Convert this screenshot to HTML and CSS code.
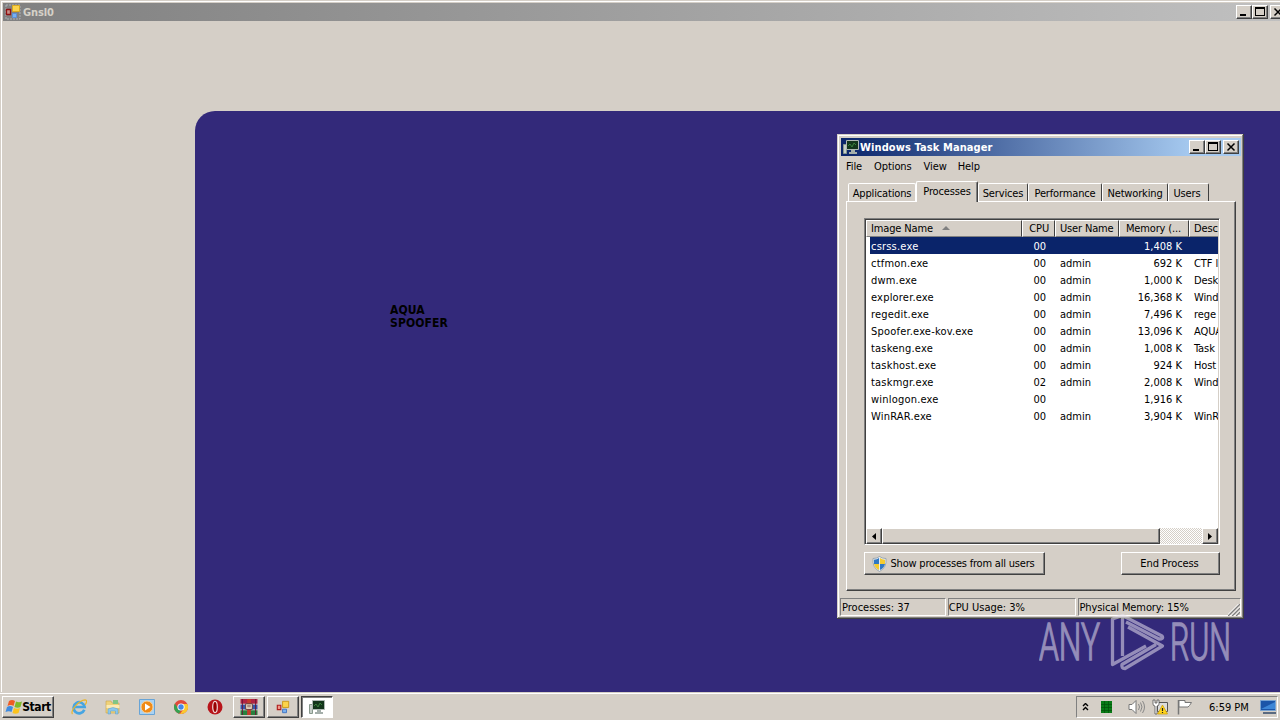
FILE: index.html
```html
<!DOCTYPE html>
<html lang="en">
<head>
  <meta charset="UTF-8">
  <title>Desktop</title>
  <link rel="stylesheet" href="styles.css">
</head>
<body>
  <svg class="defs" width="0" height="0">
    <symbol id="i-app" viewBox="0 0 16 16">
      <path d="M1 1h14v14H1z" fill="none" stroke="#b8bcc4" stroke-width=".8" stroke-dasharray="2 1"/>
      <path d="M7.500 1.500h7v6h-7z" fill="#fbd34b" stroke="#d8a820"/>
      <path d="M1.500 5.500h4v5h-4z" fill="#c89088" stroke="#901010" stroke-width="1.300"/>
      <path d="M7.500 9.500h4v4h-4z" fill="#79b1f0" stroke="#5c90d8"/>
    </symbol>
    <symbol id="i-monitor" viewBox="0 0 16 16">
      <path d="M.5 5.500h3v9h-3z" fill="#c5cec8" stroke="#88988c"/>
      <path d="M3.500 1.500h12v9h-12z" fill="#12351b" stroke="#aeb8b4"/>
      <path d="M5 7l2-2 2 3 2-4 2 2" fill="none" stroke="#38803c"/>
      <path d="M8 11h4v2h2v2H6v-2h2z" fill="#a4aeaa"/>
    </symbol>
    <symbol id="i-min" viewBox="0 0 12 10"><path d="M2 7h6v2H2z"/></symbol>
    <symbol id="i-max" viewBox="0 0 12 10"><path d="M1 0h10v9H1zM2 2v6h8V2z" fill-rule="evenodd"/></symbol>
    <symbol id="i-close" viewBox="0 0 12 10"><path d="M2.500 1.500l7 7m0-7l-7 7" fill="none" stroke="#000" stroke-width="1.500"/></symbol>
  </svg>

  <main class="desktop">
    <section class="app">
      <header class="titlebar titlebar-off">
        <svg class="icon"><use href="#i-app"/></svg>
        <h1>Gnsl0</h1>
        <div class="controls">
          <button aria-label="Minimize"><svg><use href="#i-min"/></svg></button>
          <button aria-label="Maximize"><svg><use href="#i-max"/></svg></button>
          <button class="gap" aria-label="Close"><svg><use href="#i-close"/></svg></button>
        </div>
      </header>
      <div class="app-body">
        <div class="panel"><p>AQUA<br>SPOOFER</p></div>
      </div>
    </section>

    <footer class="taskbar">
      <button class="start">
        <svg width="18" height="16" viewBox="0 0 18 16">
          <path d="M4 2q3-2 6 0L8.500 7Q6 5 2.500 7z" fill="#ef5b24"/>
          <path d="M11 2.500q3 1.500 6 0L15.500 8q-3 1.500-6 0z" fill="#7fba28"/>
          <path d="M2 8q3-2 6 0l-1.500 5Q4 11.500.500 13z" fill="#3f8be0"/>
          <path d="M9 9q3 1.500 6 0l-1.500 5q-3 1.500-6 0z" fill="#fcc31c"/>
        </svg>
        <span>Start</span>
      </button>
      <nav class="quick">
        <svg viewBox="0 0 16 16"><path d="M13.300 10.700A5.500 5.500 0 1 1 13.600 8H4" fill="none" stroke="#46a5e2" stroke-width="2.700"/><path d="M1.500 15C-1 12 8 1 14 .800c3 0 1 4 0 5" fill="none" stroke="#e9b52c" stroke-width="1.200"/></svg>
        <svg viewBox="0 0 16 16"><path d="M1 2h5l1 2h7v10H1z" fill="#efd27a" stroke="#c9a449" stroke-width=".6"/><path d="M8 1h5v4H8z" fill="#82c584"/><path d="M1.500 6h13v3h-13z" fill="#fbeab4"/><path d="M3 15v-5q5-3 10 0v5h-2.500v-3h-5v3z" fill="#8cc7ec" stroke="#5a9cc8" stroke-width=".5"/></svg>
        <svg viewBox="0 0 16 16"><path d="M.5.500h15v15H.5z" fill="#a9d2f3" stroke="#68a4d6"/><circle cx="8" cy="8" r="6" fill="#f08a16" stroke="#fbd198"/><path d="M6 4.500l5.500 3.500L6 11.500z" fill="#fff"/></svg>
        <svg viewBox="0 0 16 16"><circle cx="8" cy="8" r="7" fill="#e04a3c"/><path d="M1.900 4.600L5.300 10l2.700 1L6 14.700A7 7 0 0 1 1.900 4.600z" fill="#35a151"/><path d="M8 5h6.300A7 7 0 0 1 7 15l4-5.500z" fill="#fbc92f"/><circle cx="8" cy="8" r="3.600" fill="#fff"/><circle cx="8" cy="8" r="2.700" fill="#4386e8"/></svg>
        <svg viewBox="0 0 16 16"><circle cx="8" cy="8" r="7.500" fill="#b8141a"/><ellipse cx="8" cy="8" rx="2.300" ry="5.600" fill="#900" stroke="#f0d8d8" stroke-width="1.200"/></svg>
      </nav>
      <div class="tasks">
        <button>
          <svg width="18" height="16" viewBox="0 0 18 17"><path d="M0 0h18v5H0z" fill="#b02444"/><path d="M0 6h18v5H0z" fill="#3458b0"/><path d="M0 12h18v5H0z" fill="#27813e"/><path d="M2 0v17M16 0v17" stroke="#6b1838" stroke-width="1"/><path d="M7 0h4v17H7z" fill="#c33a2c"/><path d="M5.500 5h7v6h-7z" fill="#f4ead0" stroke="#633"/><path d="M8 6v3M10 6v3" stroke="#633"/></svg>
        </button>
        <button>
          <svg width="14" height="14" viewBox="0 0 16 16"><path d="M7.500 1.500h7v7h-7z" fill="#fbd34b" stroke="#c89412"/><path d="M1.500 6h4v5h-4z" fill="#ef9888" stroke="#b01c1c" stroke-width="1.300"/><path d="M7.500 10.500h4.500v4H7.500z" fill="#79b1f0" stroke="#3c70c0"/></svg>
        </button>
        <button class="active"><svg width="16" height="16"><use href="#i-monitor"/></svg></button>
      </div>
      <div class="tray">
        <svg class="t-chev" width="7" height="9" viewBox="0 0 7 9"><path d="M1 3l2.500-2.500L6 3M1 7l2.500-2.500L6 7" fill="none" stroke="#000" stroke-width="1.400"/></svg>
        <svg class="t-cpu" width="11" height="12" viewBox="0 0 11 12"><path d="M0 0h11v12H0z" fill="#087a16"/><path d="M0 3.500h11M0 6.500h11M0 9.500h11M3.500 0v12M7.500 0v12" stroke="#035008" stroke-width=".7"/></svg>
        <svg class="t-vol" width="18" height="16" viewBox="0 0 18 16"><path d="M1 5.500h3l4-4v13l-4-4H1z" fill="#fff" stroke="#777"/><path d="M10.500 5q2 3 0 6M12.500 3.500q3 4.500 0 9M14.500 2q4 6 0 12" fill="none" stroke="#888"/></svg>
        <svg class="t-net" width="17" height="16" viewBox="0 0 17 16"><path d="M5.500 3.500h10v9h-10z" fill="#ddd" stroke="#555"/><path d="M1 1v4q0 2 2 2v8h2V7q2 0 2-2V1H5v3H3V1z" fill="#fff" stroke="#555" stroke-width=".8"/><path d="M10.500 6l5 9h-10z" fill="#ffd51d" stroke="#c99a00" stroke-width=".7"/><path d="M10.500 9v3m0 1v1" stroke="#222" stroke-width="1.200"/></svg>
        <svg class="t-flag" width="17" height="16" viewBox="0 0 17 16"><path d="M2.500 1v14.500" stroke="#777" stroke-width="1.500"/><path d="M3 1.500h6v2h6.500l-2 3-1.500 1.500H9V8H3z" fill="#fff" stroke="#777"/></svg>
        <time>6:59 PM</time>
        <svg class="t-desk" width="16" height="14" viewBox="0 0 16 14"><path d="M.5.500h15v10H.5z" fill="#1b55a8" stroke="#79a3d1"/><path d="M1 9L15 2v7z" fill="#3d86d6"/><path d="M3 12h13v2H3z" fill="#5a6a80"/></svg>
      </div>
    </footer>
  </main>

  <section class="window">
    <header class="titlebar">
      <svg class="icon"><use href="#i-monitor"/></svg>
      <h2>Windows Task Manager</h2>
      <div class="controls">
        <button aria-label="Minimize"><svg><use href="#i-min"/></svg></button>
        <button aria-label="Maximize"><svg><use href="#i-max"/></svg></button>
        <button class="gap" aria-label="Close"><svg><use href="#i-close"/></svg></button>
      </div>
    </header>
    <nav class="menu"><span>File</span><span>Options</span><span>View</span><span>Help</span></nav>
    <div class="tabs">
      <span class="tab-apps">Applications</span><span class="tab-proc selected">Processes</span><span class="tab-serv">Services</span><span class="tab-perf">Performance</span><span class="tab-net">Networking</span><span class="tab-users">Users</span>
    </div>
    <div class="page">
      <div class="list">
        <div class="row head">
          <span>Image Name <i class="sort"></i></span><span>CPU</span><span>User Name</span><span>Memory (...</span><span>Desc</span>
        </div>
        <div class="rows">
          <div class="row current"><span>csrss.exe</span><span>00</span><span></span><span>1,408 K</span><span></span></div>
          <div class="row"><span>ctfmon.exe</span><span>00</span><span>admin</span><span>692 K</span><span>CTF l</span></div>
          <div class="row"><span>dwm.exe</span><span>00</span><span>admin</span><span>1,000 K</span><span>Desk</span></div>
          <div class="row"><span>explorer.exe</span><span>00</span><span>admin</span><span>16,368 K</span><span>Wind</span></div>
          <div class="row"><span>regedit.exe</span><span>00</span><span>admin</span><span>7,496 K</span><span>rege</span></div>
          <div class="row"><span>Spoofer.exe-kov.exe</span><span>00</span><span>admin</span><span>13,096 K</span><span>AQUA</span></div>
          <div class="row"><span>taskeng.exe</span><span>00</span><span>admin</span><span>1,008 K</span><span>Task</span></div>
          <div class="row"><span>taskhost.exe</span><span>00</span><span>admin</span><span>924 K</span><span>Host</span></div>
          <div class="row"><span>taskmgr.exe</span><span>02</span><span>admin</span><span>2,008 K</span><span>Wind</span></div>
          <div class="row"><span>winlogon.exe</span><span>00</span><span></span><span>1,916 K</span><span></span></div>
          <div class="row"><span>WinRAR.exe</span><span>00</span><span>admin</span><span>3,904 K</span><span>WinR</span></div>
        </div>
        <div class="scroll">
          <button aria-label="Scroll left"><svg width="4" height="7" viewBox="0 0 4 7"><path d="M4 0v7L0 3.500z"/></svg></button>
          <div class="thumb"></div>
          <div class="track"></div>
          <button aria-label="Scroll right"><svg width="4" height="7" viewBox="0 0 4 7"><path d="M0 0v7l4-3.500z"/></svg></button>
        </div>
      </div>
      <div class="actions">
        <button class="all">
          <svg width="15" height="16" viewBox="0 0 15 16"><path d="M7.500.500Q10 2.500 14 2.500q1 9-6.500 13Q0 11.500 1 2.500q4 0 6.500-2z" fill="#e8edf2" stroke="#8c9aa8" stroke-width=".8"/><path d="M7 2v6H2V3.800Q5 3.600 7 2zM8 8h5q-1 4-5 6z" fill="#2f78c4"/><path d="M8 2v6h5V3.800Q10 3.600 8 2zM7 8H2q1 4 5 6z" fill="#f4cb2e"/></svg>
          <span>Show processes from all users</span>
        </button>
        <button class="end"><span>End Process</span></button>
      </div>
    </div>
    <footer class="status">
      <span class="s-proc">Processes: 37</span>
      <span class="s-cpu">CPU Usage: 3%</span>
      <span class="s-mem">Physical Memory: 15%
        <svg width="12" height="12" viewBox="0 0 12 12"><path d="M0 12L12 0M4 12l8-8M8 12l4-4" stroke="#808080" stroke-width="1.500"/><path d="M-1.500 12L12-1.500M2.500 12l9.500-9.500M6.500 12L12 6.500" stroke="#fff"/></svg>
      </span>
    </footer>
  </section>

  <svg class="watermark" width="198" height="64" viewBox="0 0 198 64">
    <text transform="translate(0 49.500) scale(1 1.120)" textLength="61" lengthAdjust="spacingAndGlyphs">ANY</text>
    <path d="M83.500 46V5.500L73.500 9v45.500L107 36M83.500 5.500L123 26q2 3-3 3L87 12M89 17l34.500 19L86 58.500q-4 0-3-4l34-20" fill="none" stroke-width="3.300" stroke-linejoin="round"/>
    <text transform="translate(131 49.500) scale(1 1.120)" textLength="61" lengthAdjust="spacingAndGlyphs">RUN</text>
  </svg>
</body>
</html>
```
FILE: styles.css
```css
:root {
  --face: #d5cfc7;
  --shade: #808080;
  --dark: #404040;
  --navy: #0a246a;
}
* {
  box-sizing: border-box;
}
body {
  margin: 0;
  width: 1280px;
  height: 720px;
  overflow: hidden;
  font: 11px/13px Tahoma, "DejaVu Sans Condensed", "DejaVu Sans", sans-serif;
  font-stretch: condensed;
  color: #000;
  background: var(--face);
}
h1, h2, p {
  margin: 0;
  font-size: 11px;
}
svg {
  display: block;
  flex: none;
}
.defs {
  position: absolute;
}
button {
  display: flex;
  align-items: center;
  justify-content: center;
  margin: 0;
  padding: 0;
  font: inherit;
  color: inherit;
  background: var(--face);
  border: 1px solid;
  border-color: #fff var(--dark) var(--dark) #fff;
  box-shadow: inset -1px -1px var(--shade);
}
.desktop {
  display: flex;
  flex-direction: column;
  height: 720px;
}

/* Title bars */
.titlebar {
  display: flex;
  align-items: center;
  height: 18px;
  padding: 0 2px;
  color: #fff;
  background: linear-gradient(90deg, #0a246a, #a6caf0 88%);
}
.titlebar-off {
  padding: 0 0 0 2px;
  color: #d5d1c8;
  background: linear-gradient(90deg, #808080, #c0c0c0);
}
.icon {
  width: 16px;
  height: 16px;
  margin-right: 1px;
}
.titlebar h1 {
  letter-spacing: -.1px;
}
.titlebar h2 {
  letter-spacing: .1px;
}
.controls {
  display: flex;
  margin-left: auto;
}
.controls button {
  width: 16px;
  height: 14px;
}
.controls svg {
  width: 12px;
  height: 10px;
}
.controls .gap {
  margin-left: 2px;
}

/* Maximized window */
.app {
  height: 692px;
  padding: 3px 0 0 3px;
  border-top: 0;
  box-shadow: inset 1px 1px #d5cfc7, inset 2px 2px #fff;
}
.titlebar-off .icon {
  margin-right: 2px;
}
.titlebar-off .controls {
  margin-right: -6px;
}
.app-body {
  display: flex;
  height: 671px;
  padding: 90px 0 0 192px;
}
.panel {
  flex: 1;
  padding: 193px 0 0 195px;
  background: #33297a;
  border-top-left-radius: 20px;
}
.panel p {
  font: bold 12px/13px "DejaVu Sans Condensed", sans-serif;
  letter-spacing: .1px;
}

/* Taskbar */
.taskbar {
  display: flex;
  height: 28px;
  padding: 4px 2px 2px;
  box-shadow: inset 0 1px var(--face), inset 0 2px #fff;
}
.start {
  width: 52px;
  height: 22px;
  font-size: 12px;
  font-weight: bold;
}
.start span {
  margin-left: -1px;
  letter-spacing: -.4px;
}
.quick {
  display: flex;
  gap: 18px;
  padding: 3px 0 0 17px;
}
.quick svg {
  width: 16px;
  height: 16px;
}
.tasks {
  display: flex;
  gap: 2px;
  margin-left: 10px;
}
.tasks button {
  width: 32px;
  height: 22px;
}
.tasks .active {
  background: #fff;
  border-color: var(--dark) #fff #fff var(--dark);
  box-shadow: inset 1px 1px var(--shade);
}
.tray {
  display: flex;
  align-items: center;
  width: 202px;
  height: 22px;
  margin-left: auto;
  padding-left: 5px;
  border: 1px solid;
  border-color: var(--shade) #fff #fff var(--shade);
}
.t-cpu {
  margin: -1px 0 0 12px;
}
.t-vol {
  margin-left: 16px;
}
.t-net {
  margin-left: 6px;
}
.t-flag {
  margin-left: 7px;
}
.tray time {
  width: 43px;
  margin-left: 16px;
  white-space: nowrap;
}
.t-desk {
  margin-left: 8px;
}

/* Task Manager */
.window {
  position: absolute;
  left: 837px;
  top: 134px;
  width: 407px;
  height: 485px;
  padding: 4px 3px 2px 4px;
  background: var(--face);
  border: 0;
  box-shadow: inset -1px -1px var(--dark), inset 1px 1px var(--face), inset -2px -2px var(--shade), inset 2px 2px #fff;
}
.window .titlebar {
  width: 400px;
}
.menu {
  display: flex;
  gap: 12px;
  height: 26px;
  padding: 4px 0 0 5px;
  letter-spacing: -.1px;
}
.menu span:last-child {
  margin-left: -1px;
}
.tabs {
  display: flex;
  align-items: flex-end;
  height: 19px;
  padding-left: 7px;
}
.tabs span {
  height: 18px;
  padding-top: 3px;
  text-align: center;
  white-space: nowrap;
  letter-spacing: -.15px;
  border: 1px solid;
  border-color: #fff var(--dark) transparent #fff;
  border-bottom: 0;
  border-radius: 2px 2px 0 0;
}
.tabs .selected {
  position: relative;
  height: 21px;
  margin-bottom: -1px;
  background: var(--face);
  box-shadow: inset -1px 0 var(--shade);
}
.tab-apps {
  width: 68px;
  border-right-color: #fff !important;
}
.tab-proc {
  width: 62px;
}
.tab-serv {
  width: 50px;
}
.tab-perf {
  width: 74px;
}
.tab-net {
  width: 66px;
}
.tabs .tab-users {
  width: 41px;
  padding-right: 3px;
}
.page {
  width: 390px;
  height: 390px;
  margin-left: 5px;
  padding: 16px 15px 0 17px;
  border: 1px solid;
  border-color: #fff var(--dark) var(--dark) #fff;
  box-shadow: inset -1px -1px var(--shade);
}
.list {
  width: 356px;
  height: 327px;
  border: 1px solid;
  border-color: var(--shade) #fff #fff var(--shade);
  box-shadow: inset 1px 1px var(--dark), inset -1px -1px var(--face);
  padding: 1px;
  background: #fff;
  overflow: hidden;
}
.row {
  display: grid;
  grid-template-columns: 156px 33px 64px 70px 29px;
  height: 17px;
  line-height: 19px;
}
.row span {
  height: 17px;
  padding-left: 5px;
  white-space: nowrap;
  overflow: hidden;
}
.row span:first-child {
  letter-spacing: .2px;
}
.row span:nth-child(2) {
  padding: 0 9px 0 0;
  text-align: right;
}
.row span:nth-child(4) {
  padding: 0 7px 0 0;
  text-align: right;
}
.row span:last-child {
  letter-spacing: -.1px;
}
.rows {
  height: 291px;
}
.current {
  margin-left: 4px;
  grid-template-columns: 152px 33px 64px 70px 29px;
  color: #fff;
  background: var(--navy);
}
.current span:first-child {
  padding-left: 1px;
}
.head span, .head span:first-child {
  background: var(--face);
  border: 1px solid;
  border-color: #fff var(--dark) var(--shade) #fff;
  line-height: 16px;
  padding-left: 4px;
  letter-spacing: -.15px;
}
.head span:nth-child(2) {
  padding-right: 5px;
}
.head span:last-child {
  border-right: 0;
}
.sort {
  display: inline-block;
  margin: 0 0 2px 6px;
  border: 4px solid transparent;
  border-top: 0;
  border-bottom-color: var(--shade);
}
.scroll {
  display: flex;
  height: 16px;
}
.scroll button {
  width: 16px;
}
.thumb {
  width: 278px;
  background: var(--face);
  border: 1px solid;
  border-color: #fff var(--dark) var(--dark) #fff;
  box-shadow: inset -1px -1px var(--shade);
}
.track {
  flex: 1;
  background: repeating-conic-gradient(#fff 0 25%, var(--face) 0 50%) 0 0 / 2px 2px;
}
.actions {
  display: flex;
  justify-content: space-between;
  width: 356px;
  padding-top: 7px;
}
.actions button {
  height: 23px;
}
.all {
  width: 181px;
  gap: 3px;
}
.all span {
  letter-spacing: -.2px;
  margin-right: 2px;
}
.end {
  width: 99px;
}
.end span {
  letter-spacing: -.1px;
  margin-right: 2px;
}
.status {
  display: flex;
  gap: 2px;
  padding: 7px 0 0;
  margin-left: -1px;
}
.status span {
  height: 18px;
  padding: 2px 0 0 1px;
  white-space: nowrap;
  border: 1px solid;
  border-color: var(--shade) #fff #fff var(--shade);
}
.s-proc {
  width: 106px;
}
.status .s-cpu {
  width: 129px;
  padding-left: 0;
}
.status .s-mem {
  display: flex;
  justify-content: space-between;
  width: 163px;
  padding-left: 0;
  letter-spacing: -.1px;
}
.status svg {
  margin-top: 3px;
}

/* Watermark lies over everything */
.watermark {
  position: absolute;
  left: 1039px;
  top: 610px;
  opacity: .55;
  fill: #e5e0ee;
  stroke: #e5e0ee;
}
.watermark text {
  font: 300 46px Roboto, sans-serif;
  stroke-width: 1.2px;
}
```
